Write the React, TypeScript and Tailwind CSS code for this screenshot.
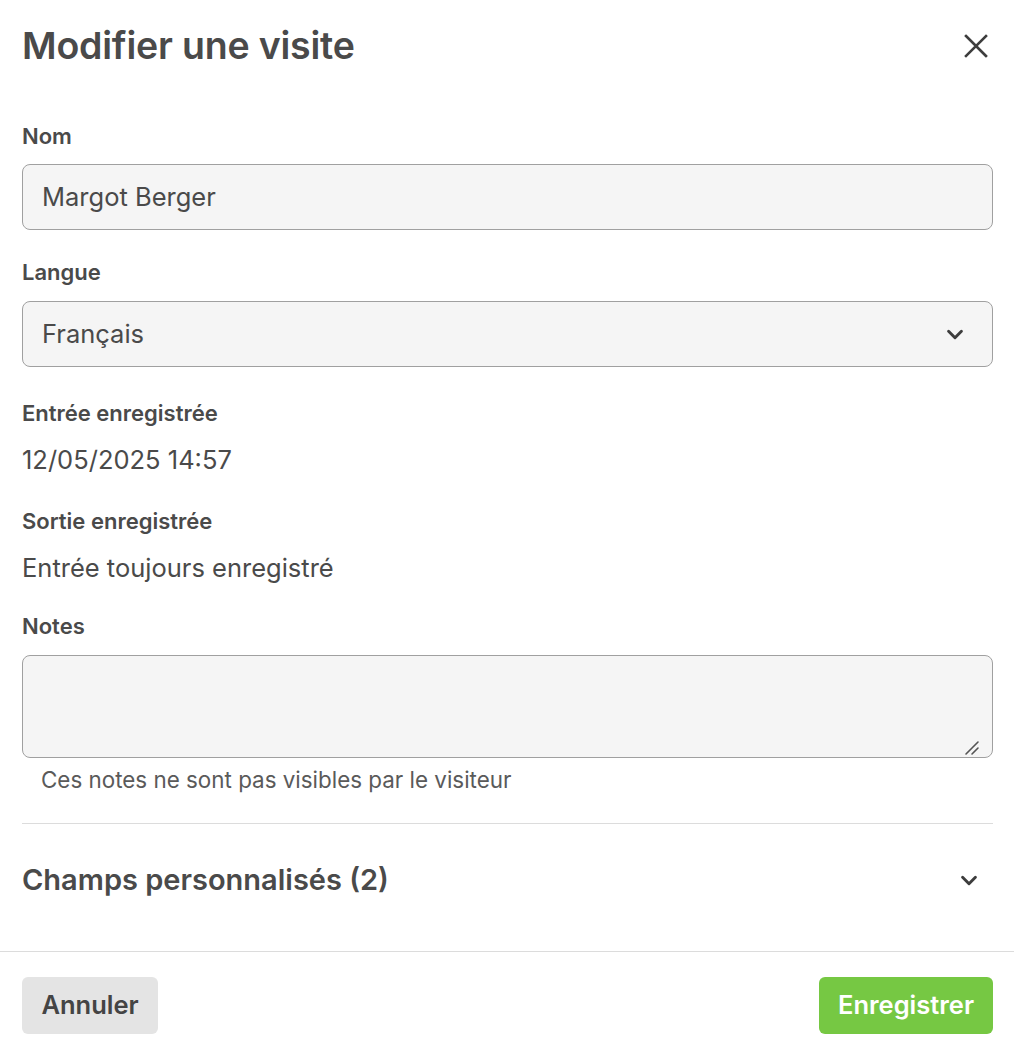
import React from "react";

const Chevron = ({ className }: { className?: string }) => (
  <svg viewBox="0 0 24 24" className={className} fill="none" stroke="currentColor" strokeWidth={3.2} strokeLinecap="round" strokeLinejoin="round">
    <path d="M5 9l7 7 7-7" />
  </svg>
);

export default function App() {
  return (
    <div
      className="w-[1014px] h-[1052px] bg-white text-[#4a4a4a] flex flex-col"
      style={{ fontFamily: "Inter, 'Noto Sans', sans-serif" }}
    >
      <div className="flex flex-col px-[22px] pr-[21px]">
        <div className="flex items-center justify-between pt-[23px]">
          <h1 className="text-[37.5px] leading-[46px] font-semibold tracking-[-0.2px]">Modifier une visite</h1>
          <svg viewBox="0 0 24 24" className="w-[24px] h-[24px] mr-[5px] text-[#3d3d3d]" fill="none" stroke="currentColor" strokeWidth={2.6} strokeLinecap="square">
            <path d="M2 2l20 20M22 2L2 22" />
          </svg>
        </div>

        <label className="mt-[55px] text-[22px] leading-[24px] font-semibold">Nom</label>
        <div className="mt-[16px] h-[66px] rounded-[8px] border border-[#a0a0a0] bg-[#f5f5f5] flex items-center px-[19px] text-[25.5px]">
          Margot Berger
        </div>

        <label className="mt-[30px] text-[22px] leading-[24px] font-semibold">Langue</label>
        <div className="mt-[17px] h-[66px] rounded-[8px] border border-[#a0a0a0] bg-[#f5f5f5] flex items-center justify-between pl-[19px] pr-[26px] text-[25.5px]">
          <span>Français</span>
          <Chevron className="w-[22px] h-[22px] text-[#3d3d3d]" />
        </div>

        <div className="mt-[34px] text-[22px] leading-[24px] font-semibold">Entrée enregistrée</div>
        <div className="mt-[20px] text-[25.5px] leading-[30px]">12/05/2025 14:57</div>

        <div className="mt-[34px] text-[22px] leading-[24px] font-semibold">Sortie enregistrée</div>
        <div className="mt-[20px] text-[25.5px] leading-[30px]">Entrée toujours enregistré</div>

        <label className="mt-[31px] text-[22px] leading-[24px] font-semibold">Notes</label>
        <div className="relative mt-[17px] flex">
          <textarea
            className="w-full h-[103px] resize-none rounded-[8px] border border-[#a0a0a0] bg-[#f5f5f5] px-[19px] py-[12px] text-[25.5px] outline-none"
            defaultValue=""
          />
          <svg viewBox="0 0 16 16" className="absolute right-[13px] bottom-[2px] w-[16px] h-[16px] text-[#555]" fill="none" stroke="currentColor" strokeWidth={1.6} strokeLinecap="round">
            <path d="M2 14L14 2M8 14L14 8" />
          </svg>
        </div>
        <div className="mt-[10px] pl-[19px] text-[22.4px] leading-[24px] text-[#5a5a5a]">
          Ces notes ne sont pas visibles par le visiteur
        </div>

        <div className="mt-[31px] h-px bg-[#dcdcdc]" />

        <div className="mt-[40px] flex items-center justify-between">
          <span className="text-[29px] leading-[32px] font-semibold">Champs personnalisés (2)</span>
          <Chevron className="w-[22px] h-[22px] mr-[13px] text-[#3d3d3d]" />
        </div>
      </div>

      <div className="mt-[55px] h-px bg-[#dcdcdc]" />

      <div className="mt-[25px] flex items-center justify-between px-[22px] pr-[21px]">
        <button className="h-[57px] w-[136px] rounded-[6px] bg-[#e4e4e4] text-[25.5px] font-semibold text-[#444]">
          Annuler
        </button>
        <button className="h-[57px] w-[174px] rounded-[6px] bg-[#76c843] text-[25.5px] font-semibold text-white">
          Enregistrer
        </button>
      </div>
    </div>
  );
}
